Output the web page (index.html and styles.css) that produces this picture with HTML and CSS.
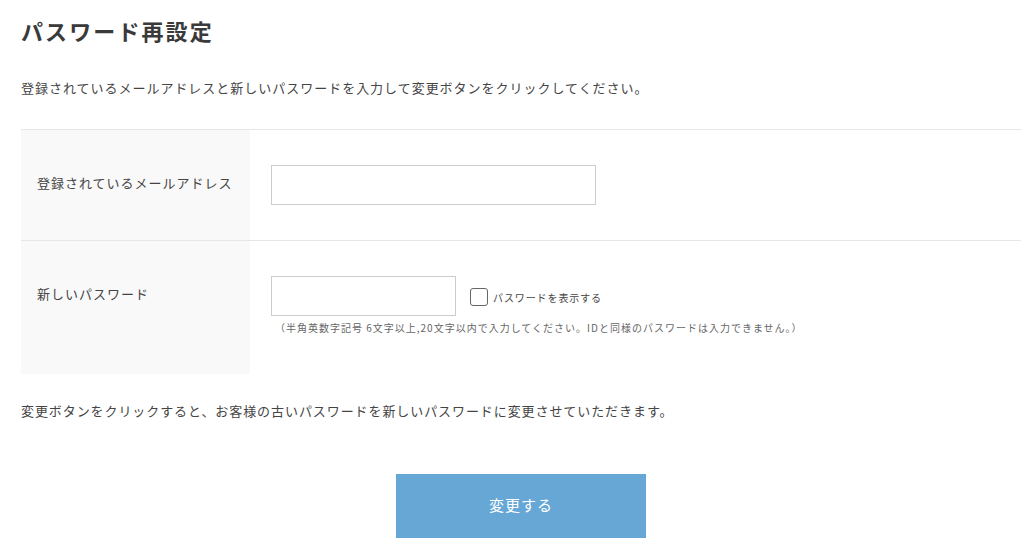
FILE: index.html
```html
<!DOCTYPE html>
<html lang="ja">
<head>
<meta charset="utf-8">
<title>パスワード再設定</title>
<link rel="stylesheet" href="styles.css">
</head>
<body>
<div class="page">
  <h1 class="title">パスワード再設定</h1>
  <p class="lead">登録されているメールアドレスと新しいパスワードを入力して変更ボタンをクリックしてください。</p>
  <div class="form">
    <div class="row row-mail">
      <div class="label">登録されているメールアドレス</div>
      <div class="field">
        <input class="input input-mail" type="text">
      </div>
    </div>
    <div class="row row-pass">
      <div class="label">新しいパスワード</div>
      <div class="field">
        <div class="pass-line">
          <input class="input input-pass" type="password">
          <label class="show"><span class="check"></span><span class="show-text">パスワードを表示する</span></label>
        </div>
        <p class="note">（半角英数字記号 6文字以上,20文字以内で入力してください。IDと同様のパスワードは入力できません。）</p>
      </div>
    </div>
  </div>
  <p class="foot">変更ボタンをクリックすると、お客様の古いパスワードを新しいパスワードに変更させていただきます。</p>
  <div class="actions">
    <button class="submit" type="button">変更する</button>
  </div>
</div>
</body>
</html>
```
FILE: styles.css
```css
html, body {
  margin: 0;
  padding: 0;
  background: #fff;
}
body {
  font-family: "Noto Sans CJK JP", "Noto Sans", sans-serif;
  color: #444;
}
.page {
  width: 1000px;
  padding: 0 15px 0 21px;
}
.title {
  margin: 0;
  padding-top: 14px;
  font-size: 22px;
  line-height: 32px;
  font-weight: 700;
  letter-spacing: 2.1px;
  color: #3a3a3a;
}
.lead {
  margin: 32px 0 0;
  font-size: 13px;
  line-height: 20px;
  letter-spacing: 0.98px;
  color: #444;
}
.form {
  margin-top: 31px;
}
.row {
  display: flex;
  border-top: 1px solid #e6e6e6;
}
.label {
  width: 213px;
  flex: none;
  background: #f9f9f9;
  padding: 43px 0 0 16px;
  font-size: 13px;
  line-height: 20px;
  letter-spacing: 1px;
  color: #444;
}
.field {
  flex: 1;
  padding: 35px 0 0 21px;
}
.row-mail .field {
  padding-bottom: 35px;
}
.row-pass .field {
  padding-bottom: 38px;
}
.input {
  display: block;
  box-sizing: border-box;
  height: 40px;
  border: 1px solid #cccccc;
  border-radius: 0;
  background: #fff;
  margin: 0;
  padding: 0 8px;
}
.input-mail {
  width: 325px;
}
.input-pass {
  width: 185px;
}
.pass-line {
  display: flex;
  align-items: center;
}
.show {
  display: flex;
  align-items: center;
  margin-left: 14px;
  margin-top: 2px;
}
.check {
  box-sizing: border-box;
  width: 18px;
  height: 18px;
  border: 1px solid #666;
  border-radius: 3px;
  background: #fff;
}
.show-text {
  margin-left: 5px;
  font-size: 10px;
  letter-spacing: 0.9px;
  color: #444;
}
.note {
  margin: 4px 0 0 4px;
  font-size: 10px;
  line-height: 16px;
  letter-spacing: 1px;
  color: #666;
}
.foot {
  margin: 27px 0 0;
  font-size: 13px;
  line-height: 20px;
  letter-spacing: 0.92px;
  color: #444;
}
.actions {
  display: flex;
  justify-content: center;
  margin-top: 53px;
  padding-bottom: 18px;
}
.submit {
  width: 250px;
  height: 64px;
  border: none;
  background: #66a7d6;
  color: #fff;
  font-family: "Noto Sans CJK JP", "Noto Sans", sans-serif;
  font-size: 15px;
  letter-spacing: 1px;
  margin: 0;
  padding: 0 0 4px;
}
```
